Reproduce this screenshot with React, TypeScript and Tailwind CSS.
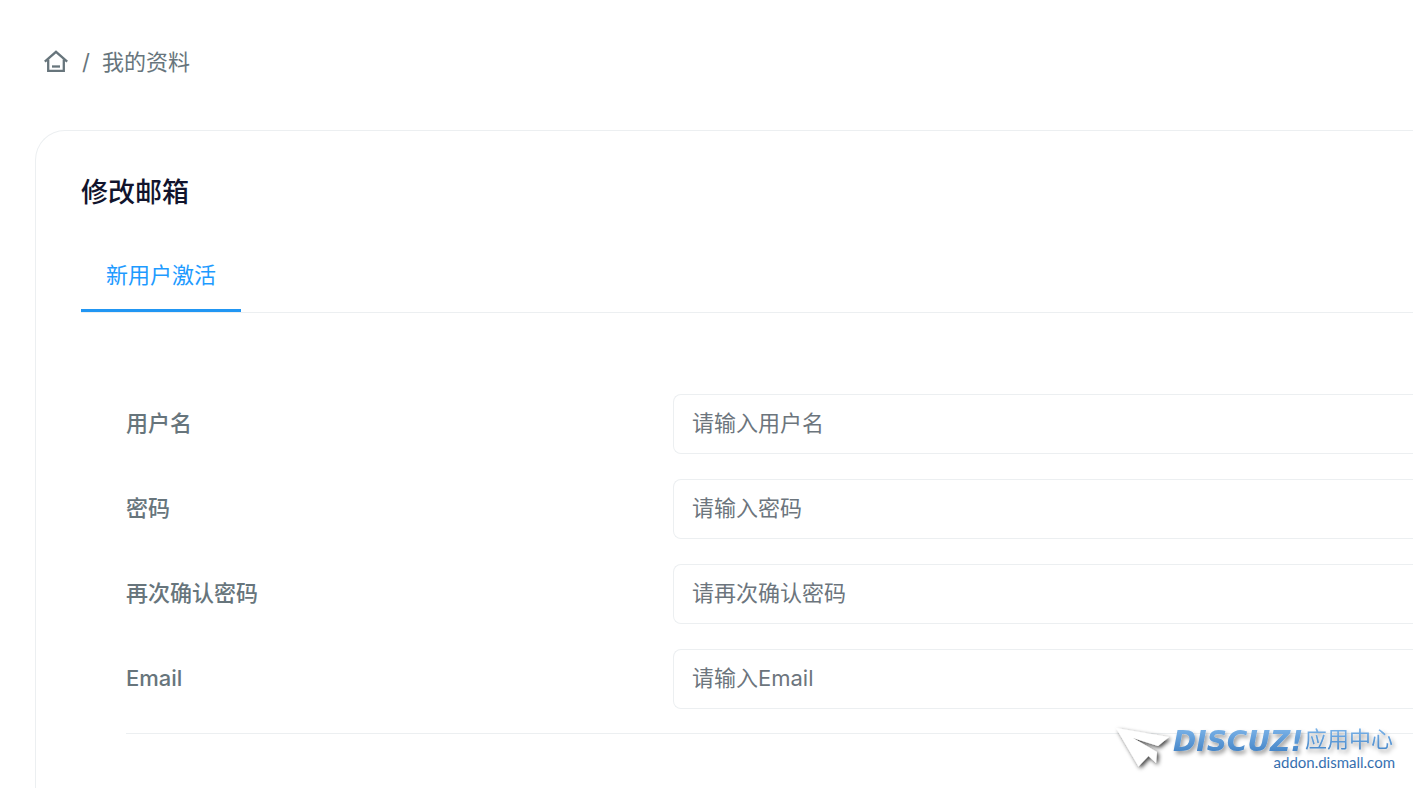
import React from "react";

type Field = { id: string; label: string; placeholder: string; type: string };

const fields: Field[] = [
  { id: "username", label: "用户名", placeholder: "请输入用户名", type: "text" },
  { id: "password", label: "密码", placeholder: "请输入密码", type: "password" },
  { id: "confirm", label: "再次确认密码", placeholder: "请再次确认密码", type: "password" },
  { id: "email", label: "Email", placeholder: "请输入Email", type: "email" },
];

function HomeIcon() {
  return (
    <svg className="size-6" viewBox="0 0 24 24" fill="none" stroke="currentColor" strokeWidth="2.3" aria-hidden="true">
      <path d="M4.2 9.5V20.8H19.8V9.5" />
      <path d="M0.8 11.6L12 1.8L23.2 11.6" />
      <path d="M8 16.5H16" />
    </svg>
  );
}

function Breadcrumb() {
  return (
    <nav aria-label="breadcrumb" className="flex h-8 items-center pl-11">
      <a href="#" aria-label="首页">
        <HomeIcon />
      </a>
      <span className="pr-3 pl-[14px]">/</span>
      <span>我的资料</span>
    </nav>
  );
}

function FieldRow({ field }: { field: Field }) {
  return (
    <div className="flex items-center">
      <label htmlFor={field.id} className="w-[547px] shrink-0 pb-[3px] font-medium">
        {field.label}
      </label>
      <input
        id={field.id}
        type={field.type}
        placeholder={field.placeholder}
        className="h-[60px] min-w-0 flex-1 rounded-l-lg border border-r-0 border-[#eceff1] bg-white px-[18px] pb-[3px] placeholder:text-[#6c757d]"
      />
    </div>
  );
}

function Watermark() {
  return (
    <svg
      className="absolute right-0 bottom-0 h-[73px] w-[313px]"
      viewBox="0 0 313 73"
      role="img"
      aria-label="Discuz! 应用中心"
    >
      <defs>
        <linearGradient id="brand" gradientUnits="userSpaceOnUse" x1="0" y1="12" x2="0" y2="37">
          <stop offset="0" stopColor="#7db5ea" />
          <stop offset="1" stopColor="#4585c7" />
        </linearGradient>
        <linearGradient id="site" gradientUnits="userSpaceOnUse" x1="0" y1="40" x2="0" y2="54">
          <stop offset="0" stopColor="#4b8acb" />
          <stop offset="1" stopColor="#2a5f9f" />
        </linearGradient>
        <filter id="soft" x="-10%" y="-20%" width="125%" height="150%">
          <feDropShadow dx="2" dy="3" stdDeviation="2" floodColor="#000" floodOpacity="0.4" />
        </filter>
        <filter id="plane" x="-20%" y="-20%" width="150%" height="150%">
          <feDropShadow dx="2" dy="2" stdDeviation="2" floodColor="#000" floodOpacity="0.75" />
        </filter>
      </defs>
      <path
        filter="url(#plane)"
        fill="#fff"
        d="M16 13L69 22L58 31L33 23L57 37L56 48L48.5 41L38.5 51.5Z"
      />
      <g filter="url(#soft)" fill="url(#brand)">
        <text x="73" y="36" className="font-['DejaVu_Sans'] text-[28px] font-bold italic">
          DISCUZ!
        </text>
        <text x="205" y="32" className="font-['Noto_Sans_CJK_SC'] text-[22px]">
          应用中心
        </text>
      </g>
      <text
        x="295"
        y="53"
        textAnchor="end"
        fill="url(#site)"
        className="font-['Lato'] text-[15px]"
      >
        addon.dismall.com
      </text>
    </svg>
  );
}

export default function App() {
  return (
    <div className="relative flex min-h-screen flex-col overflow-hidden bg-white pt-[46px] font-['Inter','Noto_Sans_CJK_SC',sans-serif] text-[22px] leading-8 text-[#67757c]">
      <Breadcrumb />
      <main className="mt-[52px] ml-[35px] flex-1 rounded-tl-[30px] border-t border-l border-[#eceff1] pt-[42px] pl-[45px]">
        <h1 className="text-[27px] leading-10 font-medium text-[#11142d]">修改邮箱</h1>
        <div role="tablist" className="mt-[26px] flex border-b border-[#eceff1]">
          <button
            type="button"
            role="tab"
            aria-selected="true"
            className="h-[73px] border-b-3 border-[#2196f3] px-[25px] pt-[2px] text-[#1e9bff]"
          >
            新用户激活
          </button>
        </div>
        <form className="mt-[81px] ml-[45px]">
          <div className="flex flex-col gap-[25px] border-b border-[#eceff1] pb-6">
            {fields.map((field) => (
              <FieldRow key={field.id} field={field} />
            ))}
          </div>
        </form>
      </main>
      <Watermark />
    </div>
  );
}
